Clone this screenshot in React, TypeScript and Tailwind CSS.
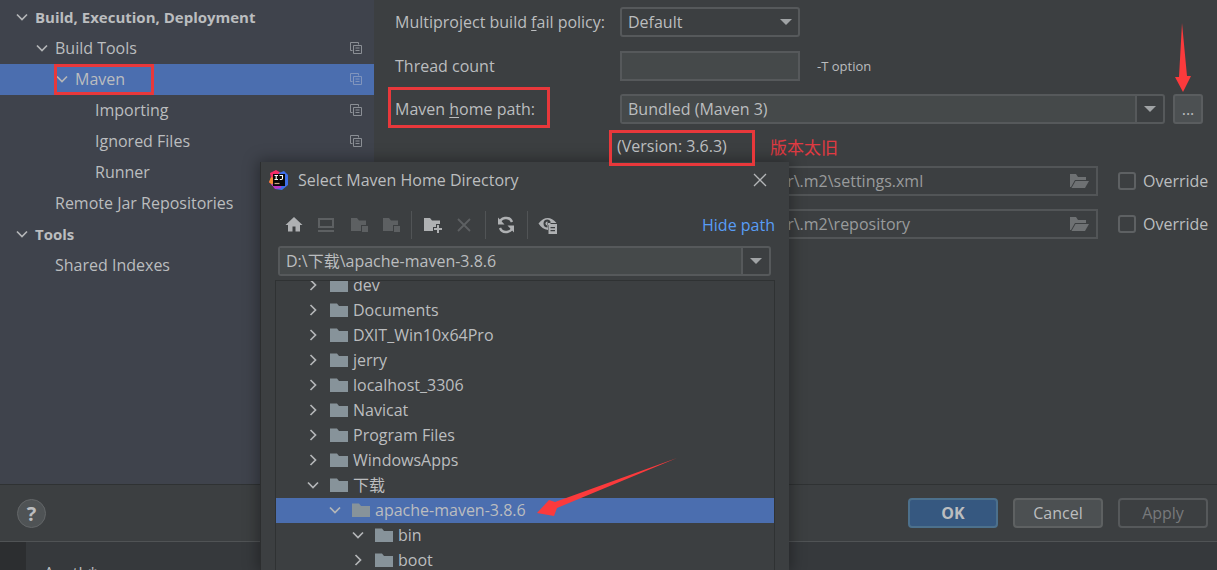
import React from "react";

const FOLDER = "M0 1.5h7l2 2.5h9v11H0z";

function Chevron({ open, className = "" }: { open: boolean; className?: string }) {
  return (
    <svg viewBox="0 0 12 12" className={`size-3 shrink-0 fill-none stroke-[#b4b6b8] stroke-[1.7] ${className}`}>
      <path d={open ? "M1 3.5l5 5 5-5" : "M3.5 1l5 5-5 5"} />
    </svg>
  );
}

function CopyIcon({ dim }: { dim?: boolean }) {
  return (
    <svg viewBox="0 0 12 12" className={`size-3 shrink-0 fill-none ${dim ? "stroke-[#8195bd]" : "stroke-[#8b8f95]"}`}>
      <path d="M2.5 8.5h-2v-8h8v2" />
      <path d="M3.5 3.5h8v8h-8zM5.5 6h4M5.5 8.5h4" />
    </svg>
  );
}

function Triangle() {
  return (
    <svg viewBox="0 0 12 6" className="h-1.5 w-3 fill-[#a0a3a5]">
      <path d="M0 0h12L6 6z" />
    </svg>
  );
}

function OpenFolder() {
  return (
    <svg viewBox="0 0 19 15" className="h-[15px] w-[19px] fill-[#6e7173]">
      <path d="M0 0h6l2 3h8v3H5L1 13H0z" />
      <path d="M5.5 7H19l-4 7H1.5z" />
    </svg>
  );
}

type Item = { label: string; level: number; open?: boolean; copy?: boolean; bold?: boolean; selected?: boolean };

const settings: Item[] = [
  { label: "Build, Execution, Deployment", level: 0, open: true, bold: true },
  { label: "Build Tools", level: 1, open: true, copy: true },
  { label: "Maven", level: 2, open: true, copy: true, selected: true },
  { label: "Importing", level: 3, copy: true },
  { label: "Ignored Files", level: 3, copy: true },
  { label: "Runner", level: 3 },
  { label: "Remote Jar Repositories", level: 1 },
  { label: "Tools", level: 0, open: true, bold: true },
  { label: "Shared Indexes", level: 1 },
];

const settingIndent = ["pl-4", "pl-9", "pl-14", "pl-[76px]"];

function Sidebar() {
  return (
    <nav className="w-[374px] shrink-0 bg-[#3f434c] pt-0.5">
      {settings.map((s) => (
        <div
          key={s.label}
          className={`relative flex h-[31px] items-center pr-3 pb-0.5 ${settingIndent[s.level]} ${s.selected ? "bg-[#4b6eaf]" : ""}`}
        >
          {s.open ? <Chevron open /> : <span className="w-3" />}
          <span className={`ml-[7px] flex-1 ${s.bold ? "text-[15px] font-bold" : ""}`}>{s.label}</span>
          {s.copy && <CopyIcon dim={s.selected} />}
          {s.selected && <span className="absolute inset-y-0 left-[54px] w-[100px] border-3 border-[#e8383b]" />}
        </div>
      ))}
    </nav>
  );
}

function PathRow({ id, label, value }: { id: string; label: string; value: string }) {
  return (
    <div className="mb-[13px] flex h-[30px] items-center">
      <label htmlFor={id} className="w-[225px] shrink-0">{label}</label>
      <div className="flex h-full min-w-0 flex-1 items-center border-2 border-[#525557] pr-[7px]">
        <input id={id} disabled defaultValue={value} className="min-w-0 flex-1 text-[#999b9c]" />
        <OpenFolder />
      </div>
      <label className="ml-5 flex w-[90px] items-center gap-[7px]">
        <input type="checkbox" className="size-[18px] shrink-0 appearance-none rounded-[3px] border-2 border-[#5e6163]" />
        Override
      </label>
    </div>
  );
}

function Form() {
  return (
    <main className="min-w-0 flex-1 pt-[7px] pl-[21px] pr-[9px]">
      <div className="mb-3.5 flex h-[30px] items-center">
        <label htmlFor="policy" className="w-[225px] shrink-0 whitespace-nowrap">
          Multiproject build <u className="underline-offset-2">f</u>ail policy:
        </label>
        <div className="relative h-full w-[180px]">
          <select id="policy" className="h-full w-full appearance-none rounded-[3px] border-2 border-[#56595b] pl-1.5">
            <option>Default</option>
          </select>
          <span className="pointer-events-none absolute inset-y-0 right-2 flex items-center"><Triangle /></span>
        </div>
      </div>
      <div className="mb-[13px] flex h-[30px] items-center">
        <label htmlFor="threads" className="w-[225px] shrink-0">Thread count</label>
        <input id="threads" className="h-full w-[180px] border-2 border-[#56595b] bg-[#45494a] pl-1.5" />
        <span className="ml-[17px] text-[13px]">-T option</span>
      </div>
      <div className="flex h-[30px] items-center">
        <label htmlFor="home" className="relative w-[225px] shrink-0">
          Maven <u className="underline-offset-2">h</u>ome path:
          <span className="absolute -top-3 -bottom-[9px] -left-[7px] w-[162px] border-3 border-[#e8383b]" />
        </label>
        <div className="flex h-full min-w-0 flex-1 overflow-hidden rounded-[3px] border-2 border-[#56595b]">
          <input id="home" defaultValue="Bundled (Maven 3)" className="min-w-0 flex-1 bg-[#45494a] pl-1.5" />
          <button aria-label="Show paths" className="flex w-7 items-center justify-center border-l-2 border-[#56595b]">
            <Triangle />
          </button>
        </div>
        <button className="mr-[5px] ml-2 h-[30px] w-[30px] rounded-[3px] border-2 border-[#5a5d5f] bg-[#4c5052]">...</button>
      </div>
      <div className="flex h-[42px] items-end pl-[214px]">
        <span className="relative z-10 h-9 w-[146px] border-3 border-[#e8383b] pl-[5px] leading-[26px]">(Version: 3.6.3)</span>
        <span className="ml-[15px] text-[17px] leading-9 text-[#e03a42]">版本太旧</span>
      </div>
      <PathRow id="userSettings" label="User settings file:" value="C:\Users\Administrator\.m2\settings.xml" />
      <PathRow id="repository" label="Local repository:" value="C:\Users\Administrator\.m2\repository" />
    </main>
  );
}

function Logo() {
  return (
    <svg viewBox="0 0 20 20" className="size-5">
      <path d="M1 3l6-3 5 3-3 8-9 2 2-5z" fill="#f52c68" />
      <path d="M0 12l2-5 6 2v9l-4-2z" fill="#f58a35" />
      <path d="M10 3l5-2 4 4v10l-6 5-7-1z" fill="#3f6fe8" />
      <path d="M2 14l4 5 6-1 1-5z" fill="#bb35c4" />
      <path d="M4 4h12v12H4z" fill="#080808" />
      <path d="M5.5 5.5h3.5M7.200 5.500v4M5.500 9.500h3.500M10.500 5.500h3v2.800q0 1.200-1.200 1.200h-1.500" fill="none" stroke="#fff" strokeWidth="1.100" />
      <path d="M5.500 13.500h5" stroke="#c9a37e" strokeWidth="1.200" />
    </svg>
  );
}

function Tool({ label, children, dim }: { label: string; children: React.ReactNode; dim?: boolean }) {
  return (
    <button aria-label={label} disabled={dim} className={`flex h-7 w-8 items-center justify-center ${dim ? "text-[#5d6062]" : "text-[#afb1b3]"}`}>
      <svg viewBox="0 0 20 20" className="size-5" fill="currentColor">{children}</svg>
    </button>
  );
}

const Separator = () => <span className="mr-1 ml-[5px] h-7 w-px bg-[#515456]" />;

function Toolbar() {
  return (
    <div className="flex h-7 items-center pl-[17px] pr-3.5">
      <Tool label="Home"><path d="M10 2l8.500 8h-2.500v6.500h-4.500v-5h-3v5H4V10H1.500z" /></Tool>
      <Tool label="Desktop" dim>
        <path fillRule="evenodd" d="M2 3h16v10H2zM4 5v6h12V5zM2 15h16v2H2z" />
      </Tool>
      <Tool label="Project" dim><path d="M3 3h6l2 2.500h7V10h-5v6H3z" /><path d="M14 11h6v6h-6z" /></Tool>
      <Tool label="Module" dim><path d="M3 3h6l2 2.500h7V10h-5v6H3z" /><path d="M14 11h6v6h-6z" /></Tool>
      <Separator />
      <Tool label="New folder">
        <path d="M2 3h6l2 2.500h8V9h-4v3h-3v4H2z" />
        <path d="M15 10h2v3h3v2h-3v3h-2v-3h-3v-2h3z" />
      </Tool>
      <Tool label="Delete" dim><path d="M4 4l12 12M16 4L4 16" stroke="currentColor" strokeWidth="1.800" /></Tool>
      <Separator />
      <Tool label="Refresh">
        <path d="M3.500 9a6.500 6.500 0 0 1 12.500-2M16.500 11a6.500 6.500 0 0 1-12.500 2" fill="none" stroke="currentColor" strokeWidth="2.400" />
        <path d="M2 2.500v7h6.500zM18 17.500v-7h-6.500z" />
      </Tool>
      <Separator />
      <Tool label="Show hidden files">
        <path fillRule="evenodd" d="M0.500 8.500Q9.500-2 18.500 8H10v7Q4 14 0.500 8.500zM9.500 4.500a4 4 0 1 0 0 8V10h3V6.500a4 4 0 0 0-3-2z" />
        <path d="M9.500 6.500a2 2 0 1 0 0 4z" />
        <path fillRule="evenodd" d="M10.500 9h8.500v10h-8.500zM12.500 12v1.200h4.500V12zM12.500 15v1.200h4.500V15z" />
      </Tool>
      <a href="#path" className="ml-auto text-[#589df6]">Hide path</a>
    </div>
  );
}

const folders = [
  { name: "dev", level: 0 },
  { name: "Documents", level: 0 },
  { name: "DXIT_Win10x64Pro", level: 0 },
  { name: "jerry", level: 0 },
  { name: "localhost_3306", level: 0 },
  { name: "Navicat", level: 0 },
  { name: "Program Files", level: 0 },
  { name: "WindowsApps", level: 0 },
  { name: "下载", level: 0, open: true },
  { name: "apache-maven-3.8.6", level: 1, open: true, selected: true },
  { name: "bin", level: 2, open: true },
  { name: "boot", level: 2 },
];

const folderIndent = ["pl-[31px]", "pl-[53px]", "pl-[76px]"];

function DirectoryDialog() {
  return (
    <section
      role="dialog"
      aria-label="Select Maven Home Directory"
      className="absolute top-[162px] bottom-0 left-[260px] flex w-[529px] flex-col overflow-hidden border-l border-[#2c2e2f] bg-[#3c3f41] shadow-[0_0_14px_2px_rgba(0,0,0,0.35)]"
    >
      <header className="flex h-9 shrink-0 items-center pl-2 pr-[22px]">
        <Logo />
        <h1 className="ml-[9px] flex-1">Select Maven Home Directory</h1>
        <button aria-label="Close">
          <svg viewBox="0 0 14 14" className="size-3.5 stroke-[#b4b6b8] stroke-[1.3]"><path d="M1 1l12 12M13 1L1 13" /></svg>
        </button>
      </header>
      <div className="mt-[13px] mb-[7px] shrink-0"><Toolbar /></div>
      <div className="mr-[18px] ml-[17px] flex h-[30px] shrink-0 overflow-hidden rounded-[3px] border-2 border-[#56595b]">
        <input aria-label="Path" defaultValue="D:\下载\apache-maven-3.8.6" className="min-w-0 flex-1 bg-[#45494a] pl-1.5" />
        <button aria-label="Recent paths" className="flex w-7 items-center justify-center border-l-2 border-[#56595b]">
          <Triangle />
        </button>
      </div>
      <div className="mt-1 mr-3.5 ml-3.5 min-h-0 flex-1 overflow-hidden border border-b-0 border-[#2f3233]">
        <ul className="-mt-2">
          {folders.map((f) => (
            <li key={f.name} className={`flex h-[25px] items-center pb-0.5 ${folderIndent[f.level]} ${f.selected ? "bg-[#4b6eaf]" : ""}`}>
              <Chevron open={!!f.open} />
              <svg viewBox="0 0 18 16" className="ml-[11px] h-4 w-[18px] shrink-0 fill-[#87939a]"><path d={FOLDER} /></svg>
              <span className="ml-[5px]">{f.name}</span>
            </li>
          ))}
        </ul>
      </div>
    </section>
  );
}

export default function App() {
  return (
    <div className="relative flex h-screen flex-col overflow-hidden bg-[#3c3f41] font-['Open_Sans','Noto_Sans_CJK_SC',sans-serif] text-[16px] leading-5 text-[#bbbdbf]">
      <div className="flex min-h-0 flex-1">
        <Sidebar />
        <Form />
      </div>
      <footer className="flex h-[58px] shrink-0 items-center gap-[15px] border-t border-b border-t-[#2f3233] border-b-[#505355] pr-[9px] pl-[17px]">
        <button className="mr-auto size-[29px] rounded-full border border-[#636668] bg-[#4f5355] text-xl font-bold">?</button>
        <button className="h-[30px] w-[90px] rounded-[4px] border-2 border-[#4c708c] bg-[#365880] font-bold">OK</button>
        <button className="h-[30px] w-[90px] rounded-[4px] border-2 border-[#5e6162] bg-[#4c5052]">Cancel</button>
        <button disabled className="h-[30px] w-[90px] rounded-[4px] border-2 border-[#56595b] text-[#77797b]">Apply</button>
      </footer>
      <div className="flex h-7 shrink-0 overflow-hidden bg-[#36393c]">
        <div className="w-[26px] bg-[#2c2e30]" />
        <span className="pt-[21px] pl-[18px]">Apath*</span>
      </div>
      <DirectoryDialog />
      <svg viewBox="0 0 16 70" className="pointer-events-none absolute top-[23px] right-[26px] h-[70px] w-4 fill-[#fb3a3c]">
        <path d="M7 0l5 53h4L8 69 0 54h4z" />
      </svg>
      <svg viewBox="0 0 140 60" className="pointer-events-none absolute top-[458px] left-[537px] h-[60px] w-[140px] fill-[#fb3a3c]">
        <path d="M140 0L20 50l-3 8L0 55l12-13 6 2z" />
      </svg>
    </div>
  );
}
